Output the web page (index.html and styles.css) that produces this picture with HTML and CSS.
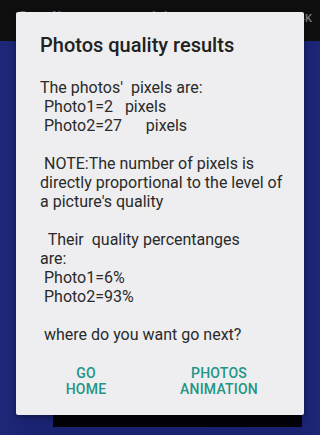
FILE: index.html
```html
<!DOCTYPE html>
<html>
<head>
<meta charset="utf-8">
<link rel="stylesheet" href="styles.css">
</head>
<body>
<div class="screen">
  <header class="appbar">
    <span class="app-title">Quality competition</span>
    <span class="app-count">2.4K</span>
  </header>
  <main class="content">
    <div class="black-block"></div>
  </main>

  <div class="dialog">
    <h1 class="dialog-title">Photos quality results</h1>
    <p class="dialog-message">The photos'  pixels are:
 Photo1=2   pixels
 Photo2=27      pixels

 NOTE:The number of pixels is
directly proportional to the level of
a picture's quality

  Their  quality percentanges
are:
 Photo1=6%
 Photo2=93%

 where do you want go next?</p>
    <div class="dialog-buttons">
      <button class="btn btn-home">GO<br>HOME</button>
      <button class="btn btn-anim">PHOTOS<br>ANIMATION</button>
    </div>
  </div>
</div>
</body>
</html>
```

FILE: styles.css
```css
html, body {
  margin: 0;
  padding: 0;
}
body {
  width: 320px;
  height: 435px;
  overflow: hidden;
  font-family: Roboto, "Noto Sans", sans-serif;
}
.screen {
  position: relative;
  width: 320px;
  height: 435px;
  display: flex;
  flex-direction: column;
  background: #1a2372;
}
.appbar {
  height: 41px;
  flex: none;
  background: #0f0f10;
  display: flex;
  justify-content: space-between;
  align-items: flex-start;
  box-sizing: border-box;
  padding: 7px 8px 0 16px;
}
.app-title {
  color: #6f6f72;
  font-size: 20px;
  font-weight: 500;
  line-height: 24px;
}
.app-count {
  color: #7d7d80;
  font-size: 11px;
  font-weight: 500;
  line-height: 14px;
  margin-top: 5px;
}
.content {
  flex: 1;
  display: flex;
  flex-direction: column;
  justify-content: flex-end;
  padding-bottom: 8px;
  background: linear-gradient(90deg, #1e2878 0%, #1a2372 10%, #192270 90%, #1d2677 100%);
}
.black-block {
  margin-left: 53px;
  width: 249px;
  height: 12px;
  background: #020208;
}
.dialog {
  position: absolute;
  left: 16px;
  top: 12px;
  width: 288px;
  height: 403px;
  box-sizing: border-box;
  background: #eeeef0;
  border-radius: 2px;
  box-shadow: 0 2px 6px rgba(0, 0, 0, 0.4);
  padding: 21px 24px 0 24px;
  display: flex;
  flex-direction: column;
}
.dialog-title {
  margin: 0;
  font-size: 20px;
  font-weight: 500;
  line-height: 24px;
  color: #212121;
}
.dialog-message {
  margin: 21px 0 0 0;
  font-size: 16px;
  line-height: 19px;
  color: #2a2a2a;
  white-space: pre;
}
.dialog-buttons {
  display: flex;
  margin-top: 21px;
  margin-left: 14px;
}
.btn {
  background: none;
  border: none;
  padding: 0;
  font-family: Roboto, "Noto Sans", sans-serif;
  font-size: 14px;
  font-weight: 500;
  line-height: 16px;
  color: #1f9585;
  text-align: center;
  letter-spacing: 0.2px;
}
.btn-home {
  width: 64px;
}
.btn-anim {
  width: 100px;
  margin-left: 51px;
}
```
